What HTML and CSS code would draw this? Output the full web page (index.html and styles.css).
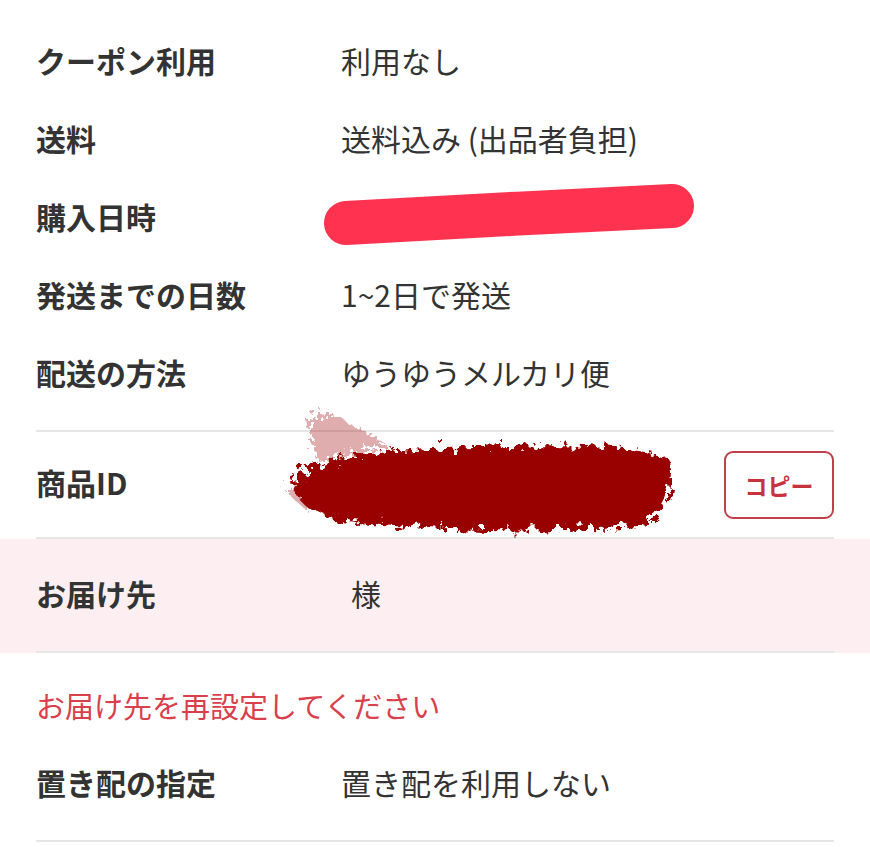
FILE: index.html
```html
<!DOCTYPE html>
<html lang="ja">
<head>
    <meta charset="UTF-8">
    <meta name="viewport" content="width=device-width, initial-scale=1.0">
    <title>取引情報</title>
    <link rel="stylesheet" href="styles.css">
</head>
<body>
    <div class="group first">
        <div class="row"><div class="label">クーポン利用</div><div class="value">利用なし</div></div>
        <div class="row"><div class="label">送料</div><div class="value">送料込み (出品者負担)</div></div>
        <div class="row">
            <div class="label">購入日時</div>
            <div class="value"></div>
            <!-- redaction stroke -->
            <svg class="mark-pink" width="380" height="70" viewBox="0 0 380 70">
                <path d="M24 44 C120 38 250 32 350 27" stroke="#ff3350" stroke-width="44" stroke-linecap="round" fill="none"/>
            </svg>
        </div>
        <div class="row"><div class="label">発送までの日数</div><div class="value">1~2日で発送</div></div>
        <div class="row"><div class="label">配送の方法</div><div class="value">ゆうゆうメルカリ便</div></div>
    </div>

    <div class="group">
        <div class="row tall">
            <div class="label">商品ID</div>
            <div class="value"></div>
            <svg class="mark-dark" width="410" height="140" viewBox="0 0 410 140">
                <defs>
                    <filter id="rough" x="-10%" y="-20%" width="120%" height="140%">
                        <feTurbulence type="fractalNoise" baseFrequency="0.12" numOctaves="4" result="n"/>
                        <feDisplacementMap in="SourceGraphic" in2="n" scale="22"/>
                    </filter>
                    <filter id="wisp" x="-20%" y="-20%" width="140%" height="140%">
                        <feTurbulence type="fractalNoise" baseFrequency="0.25" numOctaves="3" result="n"/>
                        <feDisplacementMap in="SourceGraphic" in2="n" scale="26"/>
                    </filter>
                </defs>
                <g filter="url(#wisp)" fill="#a41818" opacity="0.35">
                    <path d="M30 20 C45 8 62 10 70 22 C90 30 100 36 110 44 L40 60 Z"/>
                    <path d="M8 90 L30 80 L30 110 Z"/>
                </g>
                <g filter="url(#rough)" fill="#990000">
                    <path d="M18 72 C60 50 140 46 230 44 C300 42 362 44 392 58 C396 88 386 116 362 124 C260 130 150 128 60 118 C28 110 10 94 18 72 Z"/>
                </g>
            </svg>
            <button class="copy">コピー</button>
        </div>
    </div>

    <div class="highlight">
        <div class="group">
            <div class="row tall2"><div class="label">お届け先</div><div class="value name">様</div></div>
        </div>
    </div>

    <div class="notice">お届け先を再設定してください</div>

    <div class="group last">
        <div class="row"><div class="label">置き配の指定</div><div class="value">置き配を利用しない</div></div>
    </div>
</body>
</html>
```

FILE: styles.css
```css
body { margin: 0; background: #fff; font-family: "Noto Sans CJK JP", "Noto Sans", sans-serif; color: #333; }
.group { margin: 0 36px; border-bottom: 2px solid #e6e6e6; }
.group.first { padding: 23px 0 17px; }
.group.last { padding-bottom: 17px; }
.row { display: flex; align-items: center; height: 78px; position: relative; }
.row.tall { height: 105px; }
.row.tall2 { height: 112px; }
.label { width: 305px; flex-shrink: 0; font-size: 30px; font-weight: 700; margin-bottom: 5px; }
.value { flex: 1; font-size: 30px; margin-bottom: 5px; }
.value.name { padding-left: 10px; }
.highlight { background: #fdeff1; }
.notice { padding: 32px 36px 20px; font-size: 29px; line-height: 40px; color: #d9404c; }
.copy { width: 110px; height: 68px; flex-shrink: 0; background: #fff; border: 2px solid #c0404a; border-radius: 9px; color: #c8323c; font-family: inherit; font-size: 23px; font-weight: 700; padding: 0; }
.mark-pink { position: absolute; left: 286px; top: 0; }
.mark-dark { position: absolute; left: 242px; top: -30px; }
```
